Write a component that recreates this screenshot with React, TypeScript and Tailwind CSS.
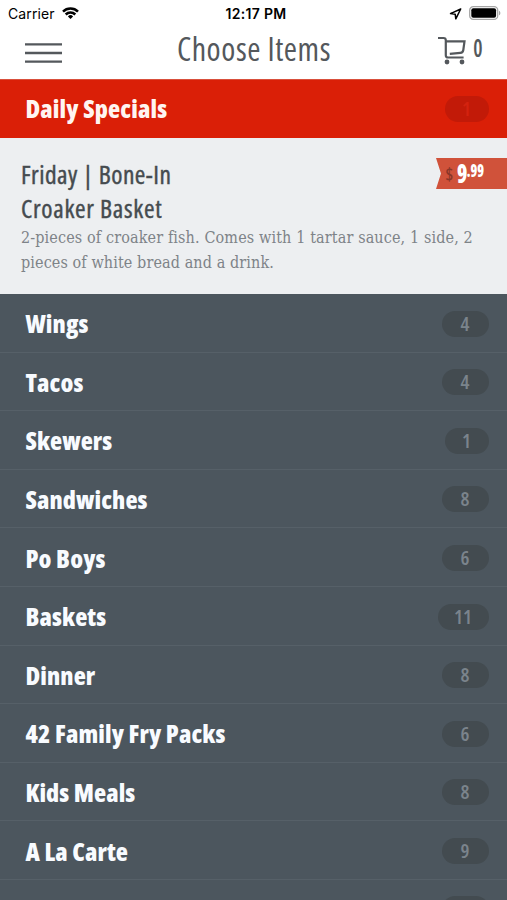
const categories = [
  { name: 'Wings', count: 4 },
  { name: 'Tacos', count: 4 },
  { name: 'Skewers', count: 1 },
  { name: 'Sandwiches', count: 8 },
  { name: 'Po Boys', count: 6 },
  { name: 'Baskets', count: 11 },
  { name: 'Dinner', count: 8 },
  { name: '42 Family Fry Packs', count: 6 },
  { name: 'Kids Meals', count: 8 },
  { name: 'A La Carte', count: 9 },
  { name: 'Sides', count: 8 },
];

function StatusBar() {
  return (
    <div className="grid grid-cols-3 items-center h-[27px] pl-[8px] pr-[6px] text-black font-['Inter',sans-serif] text-[14px] leading-none">
      <div className="flex items-center gap-[7px]">
        <span className="tracking-[0.1px]">Carrier</span>
        <svg className="w-[17px] h-[12px] -mt-px" viewBox="0 0 17 12" fill="none" stroke="currentColor" strokeWidth="2.5">
          <path d="M1 4.7a10.6 10.6 0 0 1 15 0" />
          <path d="M3.7 7.5a6.8 6.8 0 0 1 9.6 0" />
          <path d="M5.9 9.4a3.7 3.7 0 0 1 5.2 0L8.5 12z" fill="currentColor" stroke="none" />
        </svg>
      </div>
      <div className="text-center font-semibold whitespace-nowrap tracking-[0.3px] pl-[3px]">12:17 PM</div>
      <div className="flex items-center justify-end gap-[7px]">
        <svg className="w-[13px] h-[12px]" viewBox="0 0 13 12" fill="none" stroke="currentColor" strokeWidth="1.5" strokeLinejoin="round">
          <path d="M11.7 1 1.5 5.6l4.7.6.6 4.6z" />
        </svg>
        <svg className="w-[32px] h-[14px] -mt-px" viewBox="0 0 32 14">
          <rect x="0.7" y="0.7" width="28" height="12.6" rx="3.6" fill="none" stroke="#a6a6a6" strokeWidth="1.3" />
          <rect x="2.3" y="2.3" width="24.8" height="9.4" rx="2" fill="#000" />
          <path d="M30 4.7c1.8.7 1.8 3.9 0 4.6z" fill="#a6a6a6" />
        </svg>
      </div>
    </div>
  );
}

function Header() {
  return (
    <header className="grid grid-cols-[1fr_auto_1fr] items-center h-[52px] pl-[25px] pr-[24px] pb-[9px] bg-white text-[#54585c]">
      <button className="pt-[8px]" aria-label="Menu">
        <svg className="w-[37px] h-[22px]" viewBox="0 0 37 22" stroke="currentColor" strokeWidth="2.3">
          <path d="M0 2.400h37M0 11h37M0 19.600h37" />
        </svg>
      </button>
      <h1 className="text-[32px] leading-[40px] font-normal font-stretch-condensed tracking-[0.55px]">Choose Items</h1>
      <div className="flex items-center justify-end gap-[5px]">
        <svg className="w-[30px] h-[29px] mt-[4px]" viewBox="0 0 30 29" fill="none" stroke="currentColor" strokeWidth="2.2">
          <path d="M2 2h5.500q2.300 0 2.300 2.300v14.900q0 2.300 2.300 2.300h15.500" />
          <path d="M9.800 5.400h18.700l-1.200 8.600q-.4 2.700-3 2.900l-10.500.9" />
          <circle cx="11" cy="26" r="2.400" fill="currentColor" stroke="none" />
          <circle cx="26" cy="26" r="2.400" fill="currentColor" stroke="none" />
        </svg>
        <span className="-mt-[3px] text-[26px] leading-none font-semibold font-stretch-condensed origin-right scale-x-80">0</span>
      </div>
    </header>
  );
}

function PriceTag() {
  return (
    <div className="flex items-start w-[71px] h-[31px] pl-[9.5px] bg-[#d0523a] text-white [clip-path:polygon(0_0,100%_0,100%_100%,0_100%,7%_50%)] font-extrabold font-stretch-condensed">
      <span className="w-[11px] pt-[6px] text-[17px] leading-[21px] text-[#883628] font-semibold">$</span>
      <span className="w-[9.5px] text-[26px] leading-[31px] origin-left scale-x-80">9</span>
      <span className="pt-[4px] pl-px text-[17px] leading-[18px] origin-left scale-x-80">.99</span>
    </div>
  );
}

function DailySpecials() {
  return (
    <section>
      <div className="flex items-center justify-between h-[59px] pl-[25.5px] pr-[18.5px] bg-[#da1f07] border-t border-[#d9503c]">
        <h2 className="pb-[2px] text-[25px] leading-[30px] font-extrabold font-stretch-condensed tracking-[0.15px] text-[#fff5f1]">
          Daily Specials
        </h2>
        <span className="flex items-center justify-center w-[44px] h-[26px] rounded-full bg-[#c21a08] text-[#d4220f] text-[20px] font-semibold font-stretch-condensed">
          1
        </span>
      </div>
      <div className="h-[156px] pl-[21px] pt-[20px] bg-[#edeff1]">
        <div className="flex items-start justify-between">
          <h3 className="-mt-px w-[180px] text-[25.5px] leading-[34px] font-normal font-stretch-condensed text-[#454b4f] [-webkit-text-stroke:0.4px_#454b4f]">
            <span className="block tracking-[0.45px]">Friday | Bone-In</span>
            <span className="block tracking-[0.7px]">Croaker Basket</span>
          </h3>
          <PriceTag />
        </div>
        <p className="w-[470px] text-[16px] leading-[25px] font-['DejaVu_Serif',serif] font-stretch-condensed text-[#7e8388]">
          <span className="block whitespace-nowrap tracking-[0.13px]">2-pieces of croaker fish. Comes with 1 tartar sauce, 1 side, 2</span>
          <span className="block whitespace-nowrap tracking-[0.1px]">pieces of white bread and a drink.</span>
        </p>
      </div>
    </section>
  );
}

function CategoryRow({ name, count }: { name: string; count: number }) {
  return (
    <li className="flex items-center justify-between shrink-0 h-[58.6px] pl-[25.5px] pr-[18.5px] border-b border-[#566068]">
      <span className="pt-[0.8px] text-[25px] leading-[30px] font-extrabold font-stretch-condensed tracking-[0.1px] text-[#f8fbff]">{name}</span>
      <span
        className={`flex items-center justify-center h-[26px] mt-[1.5px] rounded-full bg-[#434b50] text-[#7b848c] text-[20px] leading-none font-semibold font-stretch-condensed ${
          count > 9 ? 'w-[51px]' : count === 1 ? 'w-[44px]' : 'w-[47px]'
        }`}
      >
        {count}
      </span>
    </li>
  );
}

export default function App() {
  return (
    <div className="flex flex-col w-[507px] h-[900px] overflow-hidden bg-white font-['Open_Sans',sans-serif]">
      <StatusBar />
      <Header />
      <DailySpecials />
      <ul className="flex flex-col flex-1 min-h-0 overflow-hidden bg-[#4c565e]">
        {categories.map((category) => (
          <CategoryRow key={category.name} {...category} />
        ))}
      </ul>
    </div>
  );
}
